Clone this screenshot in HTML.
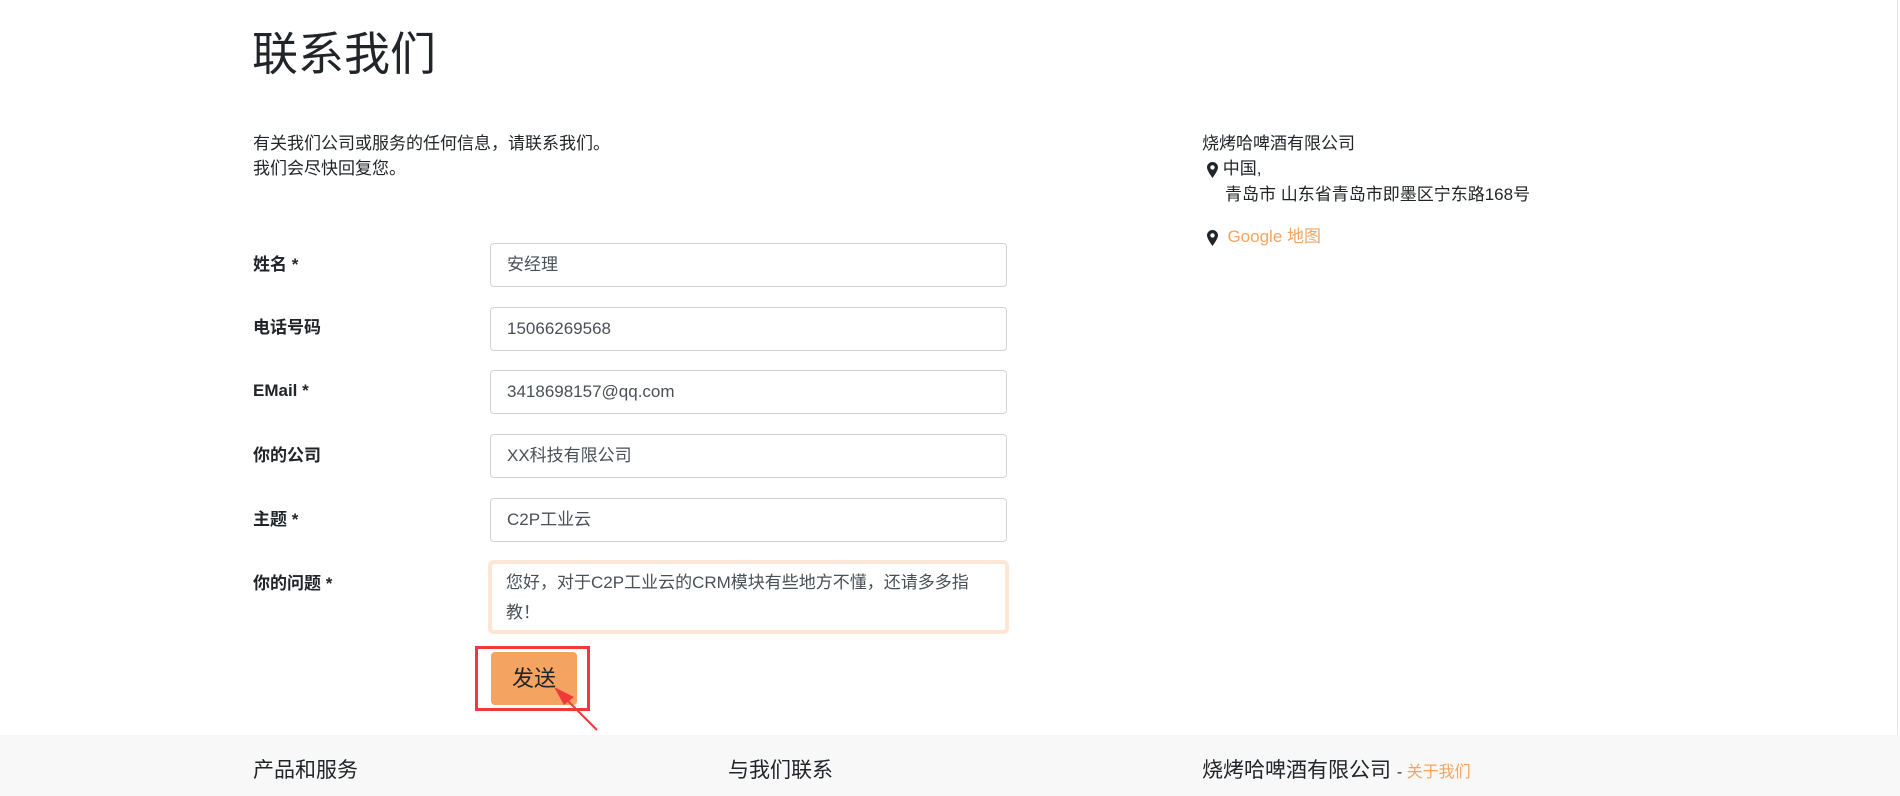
<!DOCTYPE html>
<html><head><meta charset="utf-8"><style>
*{margin:0;padding:0;box-sizing:border-box}
body{width:1900px;height:796px;position:relative;background:#fff;font-family:"Liberation Sans","Noto Sans CJK SC",sans-serif;color:#212529;overflow:hidden}
.a{position:absolute;white-space:nowrap}
h1{position:absolute;left:252px;top:26px;font-size:46px;font-weight:400;line-height:56px;font-family:"Liberation Sans","Noto Sans CJK SC",sans-serif}
.p{font-size:17px;line-height:25px}
.lbl{position:absolute;left:253px;font-size:17px;font-weight:bold;line-height:24px}
.in{position:absolute;left:490px;width:517px;height:44px;border:1px solid #ced4da;border-radius:4px;font-size:17px;color:#495057;padding:0 16px;line-height:42px}
.ta{position:absolute;left:488px;top:560px;width:521px;height:74px;border:4px solid #fde6d4;border-radius:6px;font-size:17px;color:#495057;padding:4px 14px;line-height:30px;white-space:normal}
.btn{position:absolute;left:491px;top:652px;width:86px;height:53px;background:#f4a460;border-radius:4px;font-size:22px;color:#212529;text-align:center;line-height:53px}
.red{position:absolute;left:475px;top:646px;width:115px;height:65px;border:3px solid #f03a3a}
.foot{position:absolute;left:0;top:735px;width:1900px;height:61px;background:#f8f8f8}
.ft{position:absolute;top:758px;font-size:21px;line-height:26px}
.pin{display:inline-block;vertical-align:middle}
</style></head><body>
<h1>联系我们</h1>
<div class="a p" style="left:253px;top:131px">有关我们公司或服务的任何信息，请联系我们。</div>
<div class="a p" style="left:253px;top:156px">我们会尽快回复您。</div>

<div class="lbl" style="top:253px">姓名 *</div>
<div class="in" style="top:243px">安经理</div>
<div class="lbl" style="top:316px">电话号码</div>
<div class="in" style="top:307px">15066269568</div>
<div class="lbl" style="top:379px">EMail *</div>
<div class="in" style="top:370px">3418698157@qq.com</div>
<div class="lbl" style="top:444px">你的公司</div>
<div class="in" style="top:434px">XX科技有限公司</div>
<div class="lbl" style="top:508px">主题 *</div>
<div class="in" style="top:498px">C2P工业云</div>
<div class="lbl" style="top:572px">你的问题 *</div>
<div class="ta">您好，对于C2P工业云的CRM模块有些地方不懂，还请多多指教！</div>
<div class="btn">发送</div>
<div class="red"></div>
<svg class="a" style="left:550px;top:685px" width="60" height="52"><path d="M8 6 L47 45" stroke="#f03a3a" stroke-width="2"/><path d="M4 2 L24 12 L14 20 Z" fill="#f03a3a"/></svg>

<div class="a p" style="left:1202px;top:131px">烧烤哈啤酒有限公司</div>
<div class="a p" style="left:1207px;top:156px"><svg class="pin" width="11" height="16" viewBox="0 0 11 16"><path d="M5.5 0C2.5 0 0 2.4 0 5.4 0 8.8 5.5 16 5.5 16S11 8.8 11 5.4C11 2.4 8.5 0 5.5 0Zm0 7.6a2.2 2.2 0 1 1 0-4.4 2.2 2.2 0 0 1 0 4.4Z" fill="#212529"/></svg> 中国,</div>
<div class="a p" style="left:1225px;top:182px">青岛市 山东省青岛市即墨区宁东路168号</div>
<div class="a p" style="left:1207px;top:224px"><svg class="pin" width="11" height="16" viewBox="0 0 11 16"><path d="M5.5 0C2.5 0 0 2.4 0 5.4 0 8.8 5.5 16 5.5 16S11 8.8 11 5.4C11 2.4 8.5 0 5.5 0Zm0 7.6a2.2 2.2 0 1 1 0-4.4 2.2 2.2 0 0 1 0 4.4Z" fill="#212529"/></svg> &nbsp;<span style="color:#f4a460">Google 地图</span></div>
<div class="a" style="left:1897px;top:0;width:1px;height:735px;background:#e5e5e5"></div>

<div class="foot"></div>
<div class="ft" style="left:253px">产品和服务</div>
<div class="ft" style="left:728px">与我们联系</div>
<div class="ft" style="left:1202px">烧烤哈啤酒有限公司 <span style="font-size:16px">- <span style="color:#f4a460">关于我们</span></span></div>
</body></html>
